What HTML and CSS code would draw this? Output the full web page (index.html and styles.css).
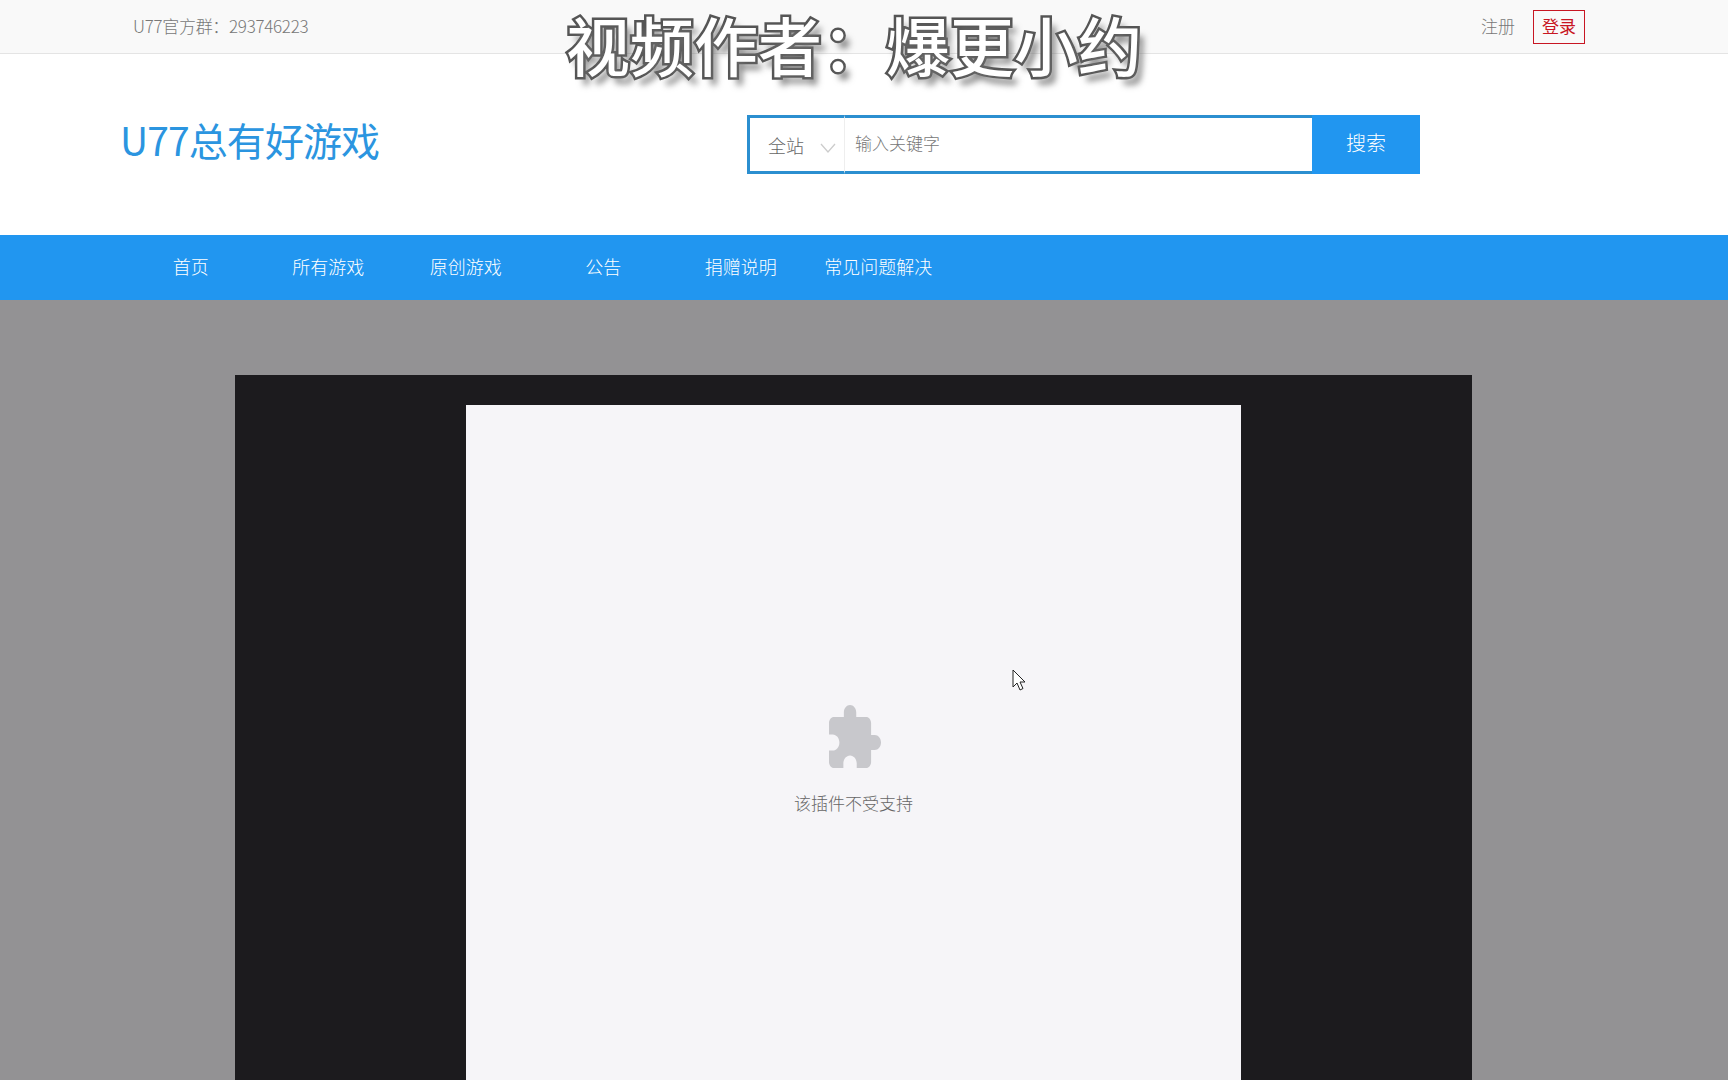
FILE: index.html
```html
<!DOCTYPE html>
<html lang="zh-CN">
<head>
<meta charset="utf-8">
<title>U77总有好游戏</title>
<link rel="stylesheet" href="styles.css">
</head>
<body>
<div class="topbar">
  <span class="group-info">U77官方群：293746223</span>
  <div class="account">
    <a class="register">注册</a>
    <a class="login">登录</a>
  </div>
</div>
<header class="masthead">
  <div class="logo">U77总有好游戏</div>
  <form class="search">
    <div class="scope">全站<svg class="chevron" viewBox="0 0 16 10"><path d="M1 1l7 8 7-8"/></svg></div>
    <div class="keyword">输入关键字</div>
    <div class="submit">搜索</div>
  </form>
</header>
<nav class="nav">
  <a>首页</a><a>所有游戏</a><a>原创游戏</a><a>公告</a><a>捐赠说明</a><a>常见问题解决</a>
</nav>
<main class="stage">
  <div class="player">
    <div class="sheet">
      <svg class="puzzle" viewBox="2 1 21 21" preserveAspectRatio="none"><path d="M20.5 11H19V7c0-1.1-.9-2-2-2h-4V3.5C13 2.12 11.88 1 10.5 1S8 2.12 8 3.5V5H4c-1.1 0-1.99.9-1.99 2v3.8H3.5c1.49 0 2.7 1.21 2.7 2.7s-1.21 2.7-2.7 2.7H2V20c0 1.1.9 2 2 2h3.8v-1.5c0-1.49 1.21-2.7 2.7-2.7 1.49 0 2.7 1.21 2.7 2.7V22H17c1.1 0 2-.9 2-2v-4h1.5c1.38 0 2.5-1.12 2.5-2.5S21.88 11 20.5 11z"/></svg>
      <p class="unsupported">该插件不受支持</p>
    </div>
  </div>
</main>
<div class="watermark">视频作者：爆更小约</div>
<svg class="cursor" viewBox="0 0 14 23"><path d="M1 1v17l4-4 3 7 3-1.500-3-6.500h5z"/></svg>
</body>
</html>
```
FILE: styles.css
```css
* { box-sizing: border-box; }
html, body { margin: 0; height: 1080px; overflow: hidden; }
body {
  position: relative;
  display: flex;
  flex-direction: column;
  background: #fff;
  font-family: "Noto Sans CJK SC", "Noto Sans", sans-serif;
  font-weight: 300;
}
.topbar {
  height: 54px;
  flex: none;
  display: flex;
  align-items: center;
  justify-content: space-between;
  padding: 0 143px 0 133px;
  background: #f9f9f9;
  border-bottom: 1px solid #e4e4e4;
  color: #777;
  font-size: 17px;
}
.group-info { letter-spacing: -0.3px; padding-bottom: 2px; }
.account { display: flex; align-items: center; gap: 18px; }
.register { padding-bottom: 2px; }
.login {
  display: flex;
  align-items: center;
  justify-content: center;
  width: 52px;
  height: 34px;
  padding-bottom: 2px;
  border: 1px solid #c81623;
  color: #c81623;
  font-weight: 400;
}
.masthead {
  height: 181px;
  flex: none;
  display: flex;
  align-items: flex-start;
  padding-left: 120px;
}
.logo {
  width: 627px;
  margin-top: 55px;
  line-height: 60px;
  font-size: 39px;
  font-weight: 400;
  color: #2b95e0;
  letter-spacing: -0.9px;
}
.search {
  display: flex;
  width: 673px;
  height: 59px;
  margin-top: 61px;
}
.scope {
  width: 97px;
  display: flex;
  align-items: center;
  padding: 0 0 0 18px;
  border: 3px solid #2b8fd0;
  border-right: 0;
  color: #666;
  font-size: 18px;
}
.chevron {
  width: 16px;
  height: 10px;
  margin: 6px 0 0 16px;
  fill: none;
  stroke: #ccc;
  stroke-width: 1.300;
}
.keyword {
  flex: 1;
  display: flex;
  align-items: center;
  padding: 0 0 5px 10px;
  border: 3px solid #2b8fd0;
  border-left: 1px solid #eee;
  border-right: 0;
  color: #777;
  font-size: 17px;
}
.submit {
  width: 108px;
  display: flex;
  align-items: center;
  justify-content: center;
  padding-bottom: 5px;
  background: #2196f0;
  color: #fff;
  font-size: 20px;
}
.nav {
  height: 65px;
  flex: none;
  display: flex;
  padding-left: 122px;
  background: #2196f0;
}
.nav a {
  width: 137.500px;
  display: flex;
  align-items: center;
  justify-content: center;
  padding-bottom: 4px;
  color: #fff;
  font-size: 18px;
  white-space: nowrap;
}
.stage {
  flex: 1;
  min-height: 0;
  padding: 75px 0 0 235px;
  background: #939294;
}
.player {
  width: 1237px;
  height: 705px;
  padding: 30px 0 0 231px;
  background: #1c1b1e;
}
.sheet {
  width: 775px;
  height: 675px;
  display: flex;
  flex-direction: column;
  align-items: center;
  padding-top: 300px;
  background: #f6f5f8;
}
.puzzle {
  width: 52px;
  height: 63px;
  margin-left: 3px;
  fill: #c8c8cc;
}
.unsupported {
  margin: 22px 0 0;
  line-height: 26px;
  color: #666;
  font-size: 17px;
}
.watermark {
  position: absolute;
  left: 566px;
  top: 3px;
  font-size: 64px;
  line-height: 80px;
  font-weight: 500;
  white-space: nowrap;
  color: #fff;
  -webkit-text-stroke: 5px #555;
  paint-order: stroke fill;
  text-shadow: 6px 8px 6px rgba(110, 110, 110, 0.8);
}
.cursor {
  position: absolute;
  left: 1012px;
  top: 669px;
  width: 14px;
  height: 23px;
  fill: #fff;
  stroke: #222;
  stroke-width: 1;
}
```
